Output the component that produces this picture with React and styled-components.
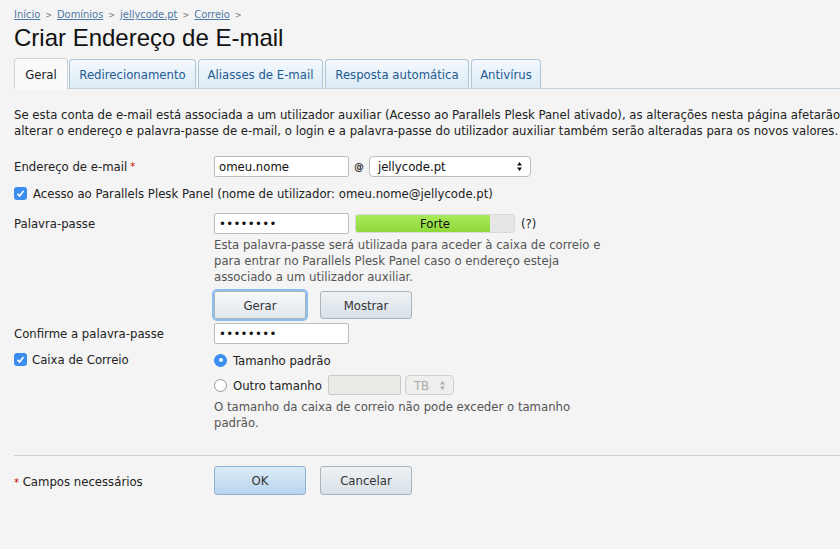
import React from 'react';
import styled, { createGlobalStyle } from 'styled-components';

const GlobalStyle = createGlobalStyle`
  html, body {
    margin: 0;
    padding: 0;
    background: #f4f4f4;
  }
  body {
    font-family: "DejaVu Sans Condensed", "DejaVu Sans", sans-serif;
    font-size: 13px;
    color: #222;
  }
`;

const Page = styled.div`
  padding: 7px 0 0 14px;
  width: 826px;
  height: 542px;
  overflow: hidden;
`;

const Crumbs = styled.div`
  display: flex;
  align-items: center;
  gap: 5px;
  font-size: 11px;
  color: #666;
  height: 15px;
`;

const Crumb = styled.a`
  color: #4f79a6;
  text-decoration: underline;
`;

const Sep = styled.span`
  color: #777;
  font-size: 9px;
`;

const Title = styled.h1`
  margin: 1px 0 0 0;
  font-family: "Liberation Sans", Arial, sans-serif;
  font-weight: normal;
  font-size: 24px;
  color: #111;
  height: 35px;
  line-height: 30px;
`;

const TabBar = styled.div`
  display: flex;
  align-items: flex-end;
  gap: 2px;
  height: 30px;
  border-bottom: 1px solid #c3d2dc;
  margin-right: -14px;
`;

const Tab = styled.div`
  width: ${p => p.$w}px;
  box-sizing: border-box;
  display: flex;
  align-items: center;
  justify-content: center;
  white-space: nowrap;
  border: 1px solid ${p => (p.$active ? '#cfd6db' : '#aec7d8')};
  border-bottom: none;
  border-radius: 4px 4px 0 0;
  background: ${p =>
    p.$active ? '#fafafa' : 'linear-gradient(#f4f9fd, #dcebf6)'};
  color: ${p => (p.$active ? '#222' : '#1f5b92')};
  margin-bottom: ${p => (p.$active ? '-1px' : '0')};
  margin-right: ${p => (p.$active ? '-1px' : '0')};
  height: ${p => (p.$active ? '31px' : '29px')};
`;

const Intro = styled.p`
  margin: 18px 0 0 0;
  line-height: 16px;
  white-space: nowrap;
  width: 840px;
  overflow: hidden;
`;

const Form = styled.div`
  margin-top: 17px;
  display: flex;
  flex-direction: column;
`;

const Row = styled.div`
  display: grid;
  grid-template-columns: 200px 1fr;
  align-items: start;
  margin-bottom: ${p => p.$mb || 0}px;
`;

const Label = styled.div`
  padding-top: ${p => p.$pt ?? 3}px;
  display: flex;
  align-items: center;
  gap: 5px;
`;

const Req = styled.span`
  color: #c00;
  font-size: 11px;
  margin-left: ${p => p.$ml ?? -2}px;
`;

const Field = styled.div`
  display: flex;
  flex-direction: column;
`;

const Inline = styled.div`
  display: flex;
  align-items: center;
  gap: ${p => p.$gap ?? 6}px;
  margin-top: ${p => p.$mt || 0}px;
  height: ${p => (p.$h ? `${p.$h}px` : 'auto')};
`;

const TextInput = styled.div`
  width: ${p => p.$w || 135}px;
  height: ${p => p.$h || 21}px;
  box-sizing: border-box;
  border: 1px solid ${p => (p.$disabled ? '#c9c9c9' : '#bcbcbc')};
  border-radius: 2px;
  background: ${p => (p.$disabled ? '#eceae4' : '#fff')};
  padding: 0 4px;
  display: flex;
  align-items: center;
  font-size: 13px;
  color: #111;
  letter-spacing: ${p => (p.$dots ? '0.3px' : '0')};
`;

const SelectBox = styled.div`
  width: ${p => p.$w}px;
  height: ${p => p.$h || 21}px;
  box-sizing: border-box;
  border: 1px solid ${p => (p.$disabled ? '#cfcfcf' : '#bdbdbd')};
  border-radius: 4px;
  background: ${p => (p.$disabled ? '#eeeeec' : '#fff')};
  color: ${p => (p.$disabled ? '#aaa' : '#111')};
  display: flex;
  align-items: center;
  justify-content: space-between;
  padding: 0 7px 0 8px;
  font-size: 13px;
`;

const At = styled.span`
  font-size: 11px;
  font-weight: bold;
  color: #333;
`;

const Check = styled.span`
  width: 13px;
  height: 13px;
  border-radius: 3px;
  background: #3b8ef0;
  display: inline-flex;
  align-items: center;
  justify-content: center;
  flex: none;
`;

const CheckRow = styled.div`
  display: flex;
  align-items: center;
  gap: 6px;
  height: 16px;
  margin: 8px 0 12px 0;
`;

const Meter = styled.div`
  width: 160px;
  height: 19px;
  box-sizing: border-box;
  border: 1px solid #d8d8d8;
  border-radius: 3px;
  background: #e6e6e6;
  position: relative;
  overflow: hidden;
`;

const MeterFill = styled.div`
  height: 100%;
  background: linear-gradient(#a9ea5a, #8fd93a);
`;

const MeterText = styled.span`
  position: absolute;
  inset: 0;
  display: flex;
  align-items: center;
  justify-content: center;
  color: #111;
`;

const Hint = styled.div`
  color: #555;
  line-height: 16px;
  margin-top: ${p => p.$mt || 3}px;
  width: ${p => p.$w || 390}px;
`;

const Buttons = styled.div`
  display: flex;
  align-items: center;
  gap: 14px;
  margin-top: ${p => p.$mt || 0}px;
`;

const Button = styled.div`
  width: 92px;
  height: ${p => p.$h || 28}px;
  box-sizing: border-box;
  border: 1px solid ${p => (p.$primary ? '#8fb2d3' : '#aab4bd')};
  border-radius: 3px;
  background: ${p =>
    p.$primary
      ? 'linear-gradient(#dcebf8, #b9d5ee)'
      : p.$focus
      ? 'linear-gradient(#f6f8fa, #e1e7ec)'
      : 'linear-gradient(#eef2f5, #d8e0e6)'};
  box-shadow: ${p => (p.$focus ? '0 0 0 2px #8cbcf0' : 'none')};
  display: flex;
  align-items: center;
  justify-content: center;
  color: #333;
  font-size: 13px;
`;

const Radio = styled.span`
  width: 13px;
  height: 13px;
  box-sizing: border-box;
  border-radius: 50%;
  flex: none;
  border: ${p => (p.$on ? 'none' : '1px solid #999')};
  background: ${p => (p.$on ? '#3b8ef0' : '#fff')};
  display: inline-flex;
  align-items: center;
  justify-content: center;
  &::after {
    content: '';
    width: 4px;
    height: 4px;
    border-radius: 50%;
    background: #fff;
    display: ${p => (p.$on ? 'block' : 'none')};
  }
`;

const Divider = styled.div`
  border-top: 1px solid #cfcfcf;
  margin: 24px -14px 0 0;
`;

const Footer = styled.div`
  display: grid;
  grid-template-columns: 200px 1fr;
  margin-top: 10px;
`;

const Arrows = () => (
  <svg width="7" height="11" viewBox="0 0 7 11">
    <path d="M3.5 1 L6 4.5 H1 Z" fill="currentColor" />
    <path d="M3.5 10 L6 6.5 H1 Z" fill="currentColor" />
  </svg>
);

const Tick = () => (
  <svg width="9" height="9" viewBox="0 0 9 9">
    <path d="M1.5 4.8 L3.6 7 L7.5 2" stroke="#fff" strokeWidth="1.7" fill="none" />
  </svg>
);

export default function App() {
  return (
    <>
      <GlobalStyle />
      <Page>
        <Crumbs>
          <Crumb>Início</Crumb>
          <Sep>&gt;</Sep>
          <Crumb>Domínios</Crumb>
          <Sep>&gt;</Sep>
          <Crumb>jellycode.pt</Crumb>
          <Sep>&gt;</Sep>
          <Crumb>Correio</Crumb>
          <Sep>&gt;</Sep>
        </Crumbs>
        <Title>Criar Endereço de E-mail</Title>
        <TabBar>
          <Tab $active $w={54}>Geral</Tab>
          <Tab $w={127}>Redirecionamento</Tab>
          <Tab $w={125}>Aliasses de E-mail</Tab>
          <Tab $w={144}>Resposta automática</Tab>
          <Tab $w={70}>Antivírus</Tab>
        </TabBar>
        <Intro>
          Se esta conta de e-mail está associada a um utilizador auxiliar (Acesso ao Parallels Plesk Panel ativado), as alterações nesta página afetarão
          <br />
          alterar o endereço e palavra-passe de e-mail, o login e a palavra-passe do utilizador auxiliar também serão alteradas para os novos valores.
        </Intro>
        <Form>
          <Row>
            <Label>
              Endereço de e-mail <Req>*</Req>
            </Label>
            <Inline $gap={5}>
              <TextInput>omeu.nome</TextInput>
              <At>@</At>
              <SelectBox $w={162}>
                jellycode.pt
                <Arrows />
              </SelectBox>
            </Inline>
          </Row>
          <CheckRow>
            <Check>
              <Tick />
            </Check>
            Acesso ao Parallels Plesk Panel (nome de utilizador: omeu.nome@jellycode.pt)
          </CheckRow>
          <Row $mb={4}>
            <Label>Palavra-passe</Label>
            <Field>
              <Inline>
                <TextInput $dots>••••••••</TextInput>
                <Meter>
                  <MeterFill style={{ width: '85%' }} />
                  <MeterText>Forte</MeterText>
                </Meter>
                <span>(?)</span>
              </Inline>
              <Hint $w={395}>
                Esta palavra-passe será utilizada para aceder à caixa de correio e para entrar no Parallels Plesk Panel caso o endereço esteja associado a um utilizador auxiliar.
              </Hint>
              <Buttons $mt={6}>
                <Button $focus>Gerar</Button>
                <Button>Mostrar</Button>
              </Buttons>
            </Field>
          </Row>
          <Row $mb={7}>
            <Label>Confirme a palavra-passe</Label>
            <TextInput $dots>••••••••</TextInput>
          </Row>
          <Row>
            <Label $pt={1}>
              <Check>
                <Tick />
              </Check>
              Caixa de Correio
            </Label>
            <Field>
              <Inline $h={18}>
                <Radio $on />
                Tamanho padrão
              </Inline>
              <Inline $mt={6}>
                <Radio />
                Outro tamanho
                <Inline $gap={4}>
                  <TextInput $disabled $w={73} $h={20} />
                  <SelectBox $w={49} $h={20} $disabled>
                    TB
                    <Arrows />
                  </SelectBox>
                </Inline>
              </Inline>
              <Hint $mt={4} $w={365}>
                O tamanho da caixa de correio não pode exceder o tamanho padrão.
              </Hint>
            </Field>
          </Row>
        </Form>
        <Divider />
        <Footer>
          <Label $pt={2}>
            <span>
              <Req $ml={0}>*</Req> Campos necessários
            </span>
          </Label>
          <Buttons>
            <Button $primary $h={29}>OK</Button>
            <Button $h={29}>Cancelar</Button>
          </Buttons>
        </Footer>
      </Page>
    </>
  );
}
